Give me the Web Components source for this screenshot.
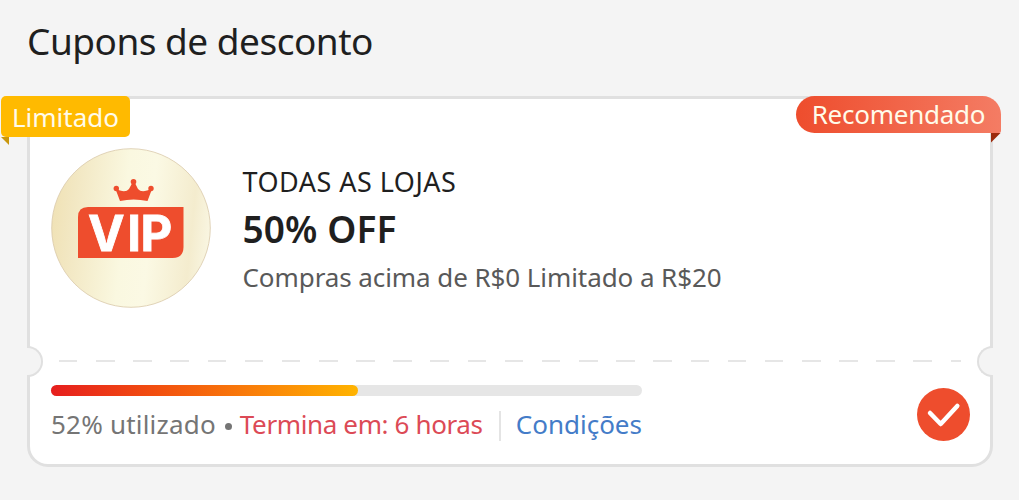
<!DOCTYPE html>
<html lang="pt-BR">
<head>
<meta charset="utf-8">
<title>Cupons de desconto</title>
<style>
  body {
    margin: 0;
    background: #f4f4f4;
    color: #1f1f1f;
    font-family: "Noto Sans", sans-serif;
    overflow: hidden;
  }
</style>
</head>
<body>
<coupon-list>
  <span slot="title">Cupons de desconto</span>
  <coupon-card>
    <coupon-badge slot="badge" type="limited">Limitado</coupon-badge>
    <coupon-badge slot="badge" type="recommended">Recomendado</coupon-badge>
    <vip-logo slot="logo"></vip-logo>
    <span slot="store">TODAS AS LOJAS</span>
    <span slot="discount">50% OFF</span>
    <span slot="rules">Compras acima de R$0 Limitado a R$20</span>
    <coupon-usage slot="usage" value="52">
      <span slot="used">52% utilizado</span>
      <span slot="ends">Termina em: 6 horas</span>
      <span slot="terms">Condições</span>
    </coupon-usage>
    <coupon-check slot="check"></coupon-check>
  </coupon-card>
</coupon-list>

<script>
class BaseElement extends HTMLElement {
  constructor() {
    super()
    const template = document.createElement('template')
    template.innerHTML = this.constructor.html
    this.attachShadow({ mode: 'open' })
    this.shadowRoot.appendChild(template.content.cloneNode(true))
  }
}

class CouponList extends BaseElement {
  static html = `
    <style>
      :host {
        display: block;
        box-sizing: border-box;
        height: 500px;
        padding: 15px 26px 0 27px;
      }

      h1 {
        margin: 0 0 29px;
        font-size: 37px;
        line-height: 52px;
        font-weight: 400;
        letter-spacing: -0.5px;
      }
    </style>
    <h1><slot name="title"></slot></h1>
    <slot></slot>
  `
}

class CouponCard extends BaseElement {
  static html = `
    <style>
      :host {
        display: flex;
        flex-direction: column;
        position: relative;
        box-sizing: border-box;
        height: 371px;
        border: 3px solid #e0e0e0;
        border-radius: 21px;
        background: white;
      }

      .top {
        display: flex;
        height: 261px;
        box-sizing: border-box;
        padding: 49px 21px 0;
      }

      .info {
        display: flex;
        flex-direction: column;
        margin-left: 32px;
        padding-top: 16px;
        white-space: nowrap;
      }

      .store {
        font-size: 27px;
        line-height: 36px;
        letter-spacing: 0.48px;
      }

      .discount {
        margin-top: 3px;
        font-size: 37px;
        line-height: 52px;
        font-weight: 600;
        letter-spacing: 0.1px;
      }

      .rules {
        margin-top: 4px;
        font-size: 26px;
        line-height: 36px;
        letter-spacing: -0.08px;
        color: #595959;
      }

      .info div {
        margin-left: -0.5px;
      }

      .cut {
        height: 2px;
        margin: 0 29px 1px;
        background: repeating-linear-gradient(90deg, #e6e6e6 0 18.5px, transparent 18.5px 37.15px);
      }

      /* half circles cut out of both sides */
      .notch {
        position: absolute;
        top: 247px;
        width: 16px;
        height: 31px;
        box-sizing: border-box;
        border: 2.5px solid #e0e0e0;
        background: #f4f4f4;
      }

      .left {
        left: -3px;
        border-left: 0;
        border-radius: 0 16px 16px 0;
      }

      .right {
        right: -3px;
        border-right: 0;
        border-radius: 16px 0 0 16px;
      }

      .bottom {
        display: flex;
        justify-content: space-between;
        padding: 22px 20px 0 21px;
      }
    </style>
    <slot name="badge"></slot>
    <div class="top">
      <slot name="logo"></slot>
      <div class="info">
        <div class="store"><slot name="store"></slot></div>
        <div class="discount"><slot name="discount"></slot></div>
        <div class="rules"><slot name="rules"></slot></div>
      </div>
    </div>
    <div class="cut"></div>
    <div class="notch left"></div>
    <div class="notch right"></div>
    <div class="bottom">
      <slot name="usage"></slot>
      <slot name="check"></slot>
    </div>
  `
}

class CouponBadge extends BaseElement {
  static html = `
    <style>
      :host {
        position: absolute;
        top: -3.5px;
        box-sizing: border-box;
        color: #fffbea;
        font-size: 26px;
        text-align: center;
        white-space: nowrap;
        z-index: 1;
      }

      :host::after {
        content: "";
        position: absolute;
        top: 100%;
        width: 8px;
        height: 8px;
      }

      :host([type="limited"]) {
        left: -29px;
        width: 129px;
        height: 41.5px;
        line-height: 42px;
        border-radius: 5px;
        background: #ffba00;
      }

      :host([type="limited"])::after {
        left: 0;
        background: #c9970d;
        clip-path: polygon(0 0, 100% 0, 100% 100%);
      }

      :host([type="recommended"]) {
        right: -11px;
        width: 205px;
        height: 37px;
        line-height: 37px;
        letter-spacing: -0.25px;
        border-radius: 19px 19px 2px 19px;
        background: linear-gradient(90deg, #ee4d2d, #f47c64);
      }

      :host([type="recommended"])::after {
        right: 0;
        width: 10px;
        height: 10px;
        background: #9c2a0c;
        clip-path: polygon(0 0, 100% 0, 0 100%);
      }
    </style>
    <slot></slot>
  `
}

class VipLogo extends BaseElement {
  static html = `
    <style>
      :host {
        display: block;
        width: 160px;
        height: 160px;
      }

      svg {
        display: block;
      }

      text {
        font-family: Inter, "Liberation Sans", sans-serif;
        font-weight: 700;
        font-size: 49px;
      }
    </style>
    <svg width="160" height="160" viewBox="0 0 160 160">
      <defs>
        <linearGradient id="gold" x1="0" y1="0.45" x2="1" y2="0.55">
          <stop offset="0" stop-color="#f0e2b6"/>
          <stop offset="0.12" stop-color="#f2e7c2"/>
          <stop offset="0.45" stop-color="#faf8e0"/>
          <stop offset="0.62" stop-color="#fbf9e4"/>
          <stop offset="0.88" stop-color="#f4ecce"/>
          <stop offset="1" stop-color="#f9f6e2"/>
        </linearGradient>
      </defs>
      <circle cx="80" cy="80" r="79.3" fill="url(#gold)" stroke="#d9c9aa" stroke-width="0.8"/>
      <g fill="#ee4d2d">
        <path d="M69 53 64.500 41 69 42.500Q75 44.500 78 41L81.200 35H84L87 41Q90 44.500 96 42.500L101 41 96.500 53Q82.500 50 69 53Z"/>
        <circle cx="82.500" cy="33.800" r="2.800"/>
        <circle cx="65.300" cy="40.500" r="2.700"/>
        <circle cx="100" cy="40.500" r="2.700"/>
        <path d="M37 59H132.500V99Q132.500 110 121.500 110H27V69Q27 59 37 59Z"/>
      </g>
      <text x="37 76.300 89.500" y="102.500" fill="white" stroke="white" stroke-width="0.800">VIP</text>
    </svg>
  `
}

class CouponUsage extends BaseElement {
  static html = `
    <style>
      :host {
        display: block;
        width: 591px;
      }

      .bar {
        height: 11px;
        border-radius: 6px;
        background: #e6e6e6;
      }

      .fill {
        height: 100%;
        border-radius: 6px;
        background: linear-gradient(90deg, #e61e1e, #f2500f 35%, #fa8209 68%, #ffb400);
      }

      .texts {
        display: flex;
        align-items: center;
        margin-top: 10px;
        font-size: 26px;
        line-height: 36px;
        white-space: nowrap;
        color: #757575;
      }

      .used {
        letter-spacing: 0.2px;
      }

      .dot {
        width: 7px;
        height: 7px;
        margin: 5px 8px 0 9px;
        border-radius: 50%;
        background: #757575;
      }

      .ends {
        letter-spacing: -0.37px;
        color: #dc4a56;
      }

      .line {
        width: 2px;
        height: 30px;
        margin: 4px 15px 0 auto;
        background: #e4e4e4;
      }

      .terms {
        color: #447cc8;
      }
    </style>
    <div class="bar"><div class="fill"></div></div>
    <div class="texts">
      <div class="used"><slot name="used"></slot></div>
      <div class="dot"></div>
      <div class="ends"><slot name="ends"></slot></div>
      <div class="line"></div>
      <div class="terms"><slot name="terms"></slot></div>
    </div>
  `

  connectedCallback() {
    this.shadowRoot.querySelector('.fill').style.width = this.getAttribute('value') + '%'
  }
}

class CouponCheck extends BaseElement {
  static html = `
    <style>
      :host {
        display: block;
        margin-top: 3px;
        width: 53px;
        height: 53px;
      }

      svg {
        display: block;
      }
    </style>
    <svg width="53" height="53" viewBox="0 0 53 53">
      <circle cx="26.500" cy="26.500" r="26.500" fill="#ee4d2d"/>
      <path d="M13 25 23.700 36 40.300 18" fill="none" stroke="white" stroke-width="4.500" stroke-linecap="round" stroke-linejoin="round"/>
    </svg>
  `
}

customElements.define('coupon-list', CouponList)
customElements.define('coupon-card', CouponCard)
customElements.define('coupon-badge', CouponBadge)
customElements.define('vip-logo', VipLogo)
customElements.define('coupon-usage', CouponUsage)
customElements.define('coupon-check', CouponCheck)
</script>
</body>
</html>
